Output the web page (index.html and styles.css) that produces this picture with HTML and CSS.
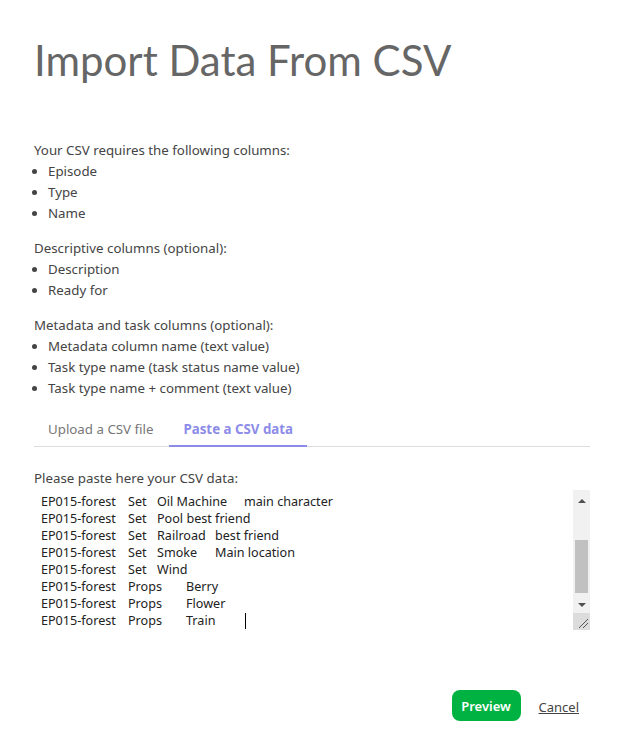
FILE: index.html
```html
<!DOCTYPE html>
<html>
<head>
<meta charset="utf-8">
<link rel="stylesheet" href="styles.css">
</head>
<body>
<div class="modal">
  <h1 class="title">Import Data From CSV</h1>
  <div class="info">
    <p class="lead">Your CSV requires the following columns:</p>
    <ul class="cols">
      <li>Episode</li>
      <li>Type</li>
      <li>Name</li>
    </ul>
    <p class="lead">Descriptive columns (optional):</p>
    <ul class="cols">
      <li>Description</li>
      <li>Ready for</li>
    </ul>
    <p class="lead">Metadata and task columns (optional):</p>
    <ul class="cols">
      <li>Metadata column name (text value)</li>
      <li>Task type name (task status name value)</li>
      <li>Task type name + comment (text value)</li>
    </ul>
  </div>
  <div class="tabs">
    <div class="tab">Upload a CSV file</div>
    <div class="tab active">Paste a CSV data</div>
  </div>
  <p class="paste-label">Please paste here your CSV data:</p>
  <div class="area">
    <div class="area-text">EP015-forest	Set	Oil Machine	main character
EP015-forest	Set	Pool best friend
EP015-forest	Set	Railroad	best friend
EP015-forest	Set	Smoke	Main location
EP015-forest	Set	Wind
EP015-forest	Props	Berry
EP015-forest	Props	Flower
EP015-forest	Props	Train	<span class="caret"></span></div>
    <div class="scrollbar">
      <div class="arrow up"></div>
      <div class="track"><div class="thumb"></div></div>
      <div class="arrow down"></div>
      <div class="resizer">
        <svg width="17" height="17" viewBox="0 0 17 17"><path d="M15 6 L6 15 M15 10 L10 15" stroke="#555" stroke-width="1" fill="none"/></svg>
      </div>
    </div>
  </div>
  <div class="actions">
    <button class="btn-preview">Preview</button>
    <a class="cancel" href="#">Cancel</a>
  </div>
</div>
</body>
</html>
```
FILE: styles.css
```css
html, body {
  margin: 0;
  padding: 0;
  background: #fff;
}
body {
  font-family: "Noto Sans", "Open Sans", sans-serif;
  font-size: 13.3px;
  color: #444;
}
.modal {
  padding: 30px 32px 0 34px;
}
.title {
  font-family: Lato, sans-serif;
  font-weight: 400;
  font-size: 42px;
  color: #666;
  margin: 0;
  line-height: 60px;
}
.info {
  margin-top: 50px;
}
.lead {
  margin: 0;
  line-height: 21px;
}
.cols {
  margin: 0 0 14px 0;
  padding: 0 0 0 14px;
  line-height: 21px;
}
.tabs {
  display: flex;
  border-bottom: 1px solid #ddd;
  margin-top: 6px;
}
.tab {
  padding: 8px 14px;
  color: #777;
  line-height: 16px;
}
.tab:first-child {
  padding-right: 16px;
}
.tab.active {
  color: #8c8ce8;
  font-weight: 700;
  border-bottom: 2px solid #8c8ce8;
  margin-bottom: -1px;
}
.paste-label {
  margin: 22px 0 0 0;
  line-height: 18px;
}
.area {
  display: flex;
  height: 140px;
  margin-top: 3px;
}
.area-text {
  flex: 1;
  white-space: pre;
  tab-size: 29px;
  -moz-tab-size: 29px;
  font-size: 12.6px;
  line-height: 17px;
  color: #222;
  padding: 3px 0 0 7px;
  overflow: hidden;
}
.caret {
  display: inline-block;
  width: 0;
  height: 16px;
  border-left: 1px solid #000;
  vertical-align: -4px;
  margin-left: 1px;
}
.scrollbar {
  width: 17px;
  display: flex;
  flex-direction: column;
  background: #f1f1f1;
}
.arrow {
  height: 17px;
  display: flex;
  align-items: center;
  justify-content: center;
}
.arrow.up {
  padding-top: 2px;
}
.arrow::before {
  content: "";
  width: 0;
  height: 0;
  border-left: 4px solid transparent;
  border-right: 4px solid transparent;
}
.arrow.up::before {
  border-bottom: 4px solid #505050;
}
.arrow.down::before {
  border-top: 4px solid #505050;
}
.track {
  flex: 1;
  padding: 31px 2px 0 2px;
}
.thumb {
  height: 53px;
  background: #c1c1c1;
}
.resizer {
  height: 17px;
  background: #dcdcdc;
}
.resizer svg {
  display: block;
}
.actions {
  display: flex;
  justify-content: flex-end;
  align-items: center;
  gap: 18px;
  margin-top: 60px;
  padding-right: 11px;
}
.btn-preview {
  background: #00b242;
  color: #fff;
  border: none;
  border-radius: 8px;
  font-family: "Noto Sans", "Open Sans", sans-serif;
  font-size: 13px;
  font-weight: 600;
  height: 31px;
  width: 69px;
  padding: 0;
}
.cancel {
  color: #444;
  text-decoration: underline;
  font-size: 13px;
  padding-top: 2px;
}
```
